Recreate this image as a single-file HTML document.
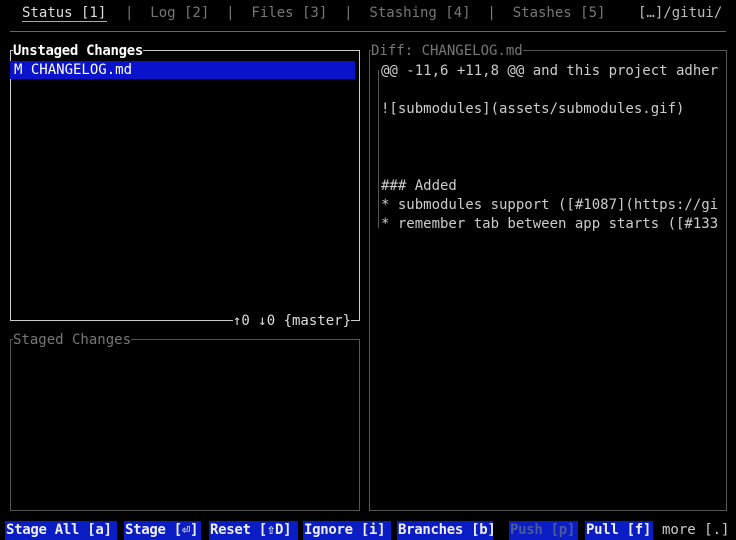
<!DOCTYPE html>
<html><head><meta charset="utf-8"><style>
html,body{margin:0;padding:0;background:#000;width:736px;height:540px;overflow:hidden}
body{position:relative;font-family:"DejaVu Sans Mono","Liberation Mono",monospace;font-size:14px;color:#ddd}
.t{position:absolute;white-space:pre;line-height:18px;height:18px}
.box{position:absolute;border:1px solid #bbb;box-sizing:border-box}
.dim{color:#777}
.btn{position:absolute;top:521px;height:19px;line-height:19px;background:#0a1cc4;color:#eee;white-space:pre;font-weight:bold;padding:0 1px;overflow:hidden;letter-spacing:-0.3px}
</style></head><body>
<div class="t" style="left:22px;top:4px;color:#ddd">Status [1]</div>
<div style="position:absolute;left:22px;top:21px;width:85px;height:1px;background:#aaa"></div>
<div class="t dim" style="left:125px;top:4px">|  Log [2]  |  Files [3]  |  Stashing [4]  |  Stashes [5]</div>
<div class="t" style="left:638px;top:4px;color:#bbb">[…]/gitui/</div>
<div style="position:absolute;left:10px;top:31px;width:716px;height:1px;background:#666"></div>

<div class="box" style="left:10px;top:50px;width:350px;height:271px;border-color:#ccc"></div>
<div class="t" style="left:13px;top:42px;background:#000;color:#fff;font-weight:bold;letter-spacing:-0.3px">Unstaged Changes</div>
<div class="t" style="left:10px;top:61px;width:345px;height:18px;background:#0a12cc;color:#fff;padding-left:4px;box-sizing:border-box;line-height:19px">M CHANGELOG.md</div>
<div class="t" style="left:233px;top:312px;background:#000;color:#ddd">↑0 ↓0 {master}</div>

<div class="box" style="left:10px;top:339px;width:350px;height:172px;border-color:#555"></div>
<div class="t dim" style="left:13px;top:331px;background:#000">Staged Changes</div>

<div class="box" style="left:369px;top:50px;width:358px;height:461px;border-color:#555"></div>
<div class="t dim" style="left:371px;top:42px;background:#000">Diff: CHANGELOG.md</div>
<div style="position:absolute;left:378px;top:70px;width:1px;height:158px;background:#555"></div>
<div class="t" style="left:381px;top:62px;color:#ccc">@@ -11,6 +11,8 @@ and this project adher</div>
<div class="t" style="left:381px;top:100px;color:#ccc">![submodules](assets/submodules.gif)</div>
<div class="t" style="left:381px;top:177px;color:#ccc">### Added</div>
<div class="t" style="left:381px;top:196px;color:#ccc">* submodules support ([#1087](https://gi</div>
<div class="t" style="left:381px;top:215px;color:#ccc">* remember tab between app starts ([#133</div>

<div class="btn" style="left:5px;width:110px">Stage All [a]</div>
<div class="btn" style="left:124px;width:75px">Stage [⏎]</div>
<div class="btn" style="left:209px;width:87px">Reset [⇧D]</div>
<div class="btn" style="left:303px;width:86px">Ignore [i]</div>
<div class="btn" style="left:397px;width:94px">Branches [b]</div>
<div class="btn" style="left:509px;width:67px;color:#4a5a9a">Push [p]</div>
<div class="btn" style="left:585px;width:66px">Pull [f]</div>
<div class="t" style="left:662px;top:521px;color:#ccc;line-height:19px">more [.]</div>
</body></html>
